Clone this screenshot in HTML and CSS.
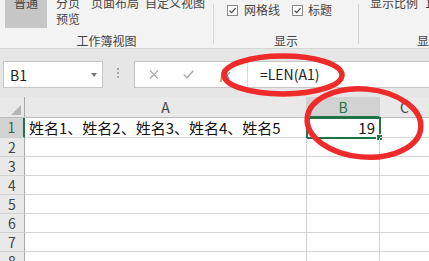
FILE: index.html
```html
<!DOCTYPE html>
<html lang="zh-CN">
<head>
  <meta charset="UTF-8" />
  <title>Excel LEN</title>
  <link rel="stylesheet" href="styles.css">
</head>
<body>
  <div class="ribbon">
    <div class="group group-views">
      <div class="tools">
        <div class="btn btn-normal">普通</div>
        <div class="btn btn-page">分页<br>预览</div>
        <div class="btn btn-layout">页面布局</div>
        <div class="btn btn-custom">自定义视图</div>
      </div>
      <div class="group-label">工作簿视图</div>
    </div>
    <div class="group group-show">
      <div class="tools checks">
        <span class="check">
          <svg width="11" height="11" viewBox="0 0 11 11"><rect x="0.5" y="0.5" width="10" height="10" fill="#fff" stroke="#8a8a8a"/><path d="M2.5 5.6 L4.6 7.7 L8.6 3.2" fill="none" stroke="#444" stroke-width="1.2"/></svg>
          网格线
        </span>
        <span class="check check-title">
          <svg width="11" height="11" viewBox="0 0 11 11"><rect x="0.5" y="0.5" width="10" height="10" fill="#fff" stroke="#8a8a8a"/><path d="M2.5 5.6 L4.6 7.7 L8.6 3.2" fill="none" stroke="#444" stroke-width="1.2"/></svg>
          标题
        </span>
      </div>
      <div class="group-label">显示</div>
    </div>
    <div class="group group-zoom">
      <div class="tools">
        <div class="btn">显示比例</div>
        <div class="btn btn-one">1</div>
      </div>
      <div class="group-label zoom-label">显示比例</div>
    </div>
  </div>

  <div class="fbar">
    <div class="namebox">
      <span>B1</span>
      <span class="caret"></span>
    </div>
    <div class="dots"><i></i><i></i><i></i></div>
    <div class="formula">
      <div class="fx-tools">
        <svg class="ico-cancel" width="10" height="9" viewBox="0 0 10 9"><path d="M1 0.5 L9 8.5 M9 0.5 L1 8.5" stroke="#a8a8a8" stroke-width="1.1"/></svg>
        <svg class="ico-enter" width="11" height="9" viewBox="0 0 11 9"><path d="M0.8 4.6 L4 7.8 L10.3 0.8" fill="none" stroke="#a8a8a8" stroke-width="1.4"/></svg>
        <span class="fx">fx</span>
      </div>
      <div class="input">=LEN(A1)</div>
    </div>
  </div>

  <div class="sheet">
    <div class="corner"><span class="tri"></span></div>
    <div class="colhead">A</div>
    <div class="colhead active">B</div>
    <div class="colhead last">C</div>

    <div class="rowhead active">1</div>
    <div class="cell">姓名1、姓名2、姓名3、姓名4、姓名5</div>
    <div class="cell num selected">19<span class="handle"></span></div>
    <div class="cell last"></div>

    <div class="rowhead">2</div><div class="cell"></div><div class="cell"></div><div class="cell last"></div>
    <div class="rowhead">3</div><div class="cell"></div><div class="cell"></div><div class="cell last"></div>
    <div class="rowhead">4</div><div class="cell"></div><div class="cell"></div><div class="cell last"></div>
    <div class="rowhead">5</div><div class="cell"></div><div class="cell"></div><div class="cell last"></div>
    <div class="rowhead">6</div><div class="cell"></div><div class="cell"></div><div class="cell last"></div>
    <div class="rowhead">7</div><div class="cell"></div><div class="cell"></div><div class="cell last"></div>
    <div class="rowhead">8</div><div class="cell"></div><div class="cell"></div><div class="cell last"></div>
  </div>

  <!-- hand drawn red marks on top of the screenshot -->
  <svg class="marks" width="429" height="261" viewBox="0 0 429 261">
    <ellipse cx="283" cy="75" rx="59" ry="19" fill="none" stroke="#ee2a2a" stroke-width="5.5"/>
    <ellipse cx="364" cy="123" rx="57" ry="34" fill="none" stroke="#ee2a2a" stroke-width="5.5" transform="rotate(5 364 123)"/>
  </svg>
</body>
</html>
```

FILE: styles.css
```css
* {
  box-sizing: border-box;
}

body {
  margin: 0;
  width: 429px;
  height: 261px;
  overflow: hidden;
  position: relative;
  background: #fff;
  font-family: "Noto Sans CJK SC", "Noto Sans", sans-serif;
  color: #444;
}

/* ribbon */

.ribbon {
  display: flex;
  height: 49px;
  padding-top: 4px;
  background: #f3f3f3;
  border-bottom: 1px solid #d6d6d6;
  overflow: hidden;
  font-size: 12px;
}

.group {
  display: flex;
  flex-direction: column;
  flex-shrink: 0;
  height: 40px;
  border-right: 1px solid #d4d4d4;
}

.group-views { width: 214px; }
.group-show { width: 145px; }
.group-zoom { width: 200px; border-right: none; }

.tools {
  display: flex;
  align-items: flex-start;
  margin-top: -9px;
  line-height: 16px;
  white-space: nowrap;
}

.group-views .tools { padding-left: 5px; }

.btn {
  white-space: nowrap;
  flex-shrink: 0;
}

.btn-normal {
  width: 42px;
  height: 33px;
  background: #c6c6c6;
  text-align: center;
}

.btn-page { margin-left: 9px; }
.btn-layout { margin-left: 11px; }
.btn-custom { margin-left: 6px; }

.group-label {
  margin-top: auto;
  margin-bottom: -4px;
  line-height: 14px;
  text-align: center;
  white-space: nowrap;
}

.checks {
  margin-top: -2px;
  padding-left: 13px;
}

.check {
  display: flex;
  align-items: center;
  gap: 6px;
  flex-shrink: 0;
}

.check-title {
  margin-left: 12px;
  gap: 5px;
}

.group-zoom .tools { padding-left: 11px; }
.btn-one { margin-left: 7px; }

.zoom-label {
  text-align: left;
  padding-left: 58px;
}

/* formula bar */

.fbar {
  display: flex;
  align-items: flex-start;
  height: 48px;
  padding-top: 12px;
  background: #e6e6e6;
}

.namebox {
  display: flex;
  align-items: center;
  justify-content: space-between;
  width: 100px;
  height: 27px;
  margin-left: 3px;
  padding: 0 5px 0 6px;
  background: #fff;
  border: 1px solid #c6c6c6;
  font-size: 14px;
  color: #222;
}

.caret {
  width: 0;
  height: 0;
  border-left: 3px solid transparent;
  border-right: 3px solid transparent;
  border-top: 4px solid #777;
}

.dots {
  display: flex;
  flex-direction: column;
  gap: 2px;
  margin: 7px 0 0 14px;
}

.dots i {
  width: 2px;
  height: 2px;
  background: #a8a8a8;
}

.formula {
  display: flex;
  height: 27px;
  margin-left: 15px;
  flex: 1;
  background: #fff;
  border: 1px solid #c6c6c6;
  border-right: none;
}

.fx-tools {
  display: flex;
  align-items: center;
  width: 113px;
  padding-left: 14px;
  border-right: 1px solid #d8d8d8;
}

.ico-enter { margin-left: 24px; }

.fx {
  margin-left: 26px;
  font-family: "Liberation Serif", serif;
  font-style: italic;
  font-size: 14px;
  color: #777;
}

.input {
  padding-left: 12px;
  font-size: 14px;
  line-height: 25px;
  color: #222;
}

/* sheet */

.sheet {
  display: grid;
  grid-template-columns: 25px 282px 73px 49px;
  grid-template-rows: 21px 20px repeat(7, 19px);
}

.corner {
  display: flex;
  align-items: flex-end;
  justify-content: flex-end;
  padding: 0 3px 2px 0;
  background: #e9e9e9;
  border-right: 1px solid #ababab;
  border-bottom: 1px solid #bdbdbd;
}

.tri {
  width: 0;
  height: 0;
  border-left: 10px solid transparent;
  border-bottom: 10px solid #b5b5b5;
}

.colhead {
  background: #e9e9e9;
  border-right: 1px solid #d0d0d0;
  border-bottom: 1px solid #bdbdbd;
  text-align: center;
  font-size: 14px;
  line-height: 21px;
}

.colhead.active {
  background: #d2d2d2;
  color: #217346;
  border-bottom: 2px solid #217346;
}

.rowhead {
  background: #e9e9e9;
  border-right: 1px solid #ababab;
  border-bottom: 1px solid #d0d0d0;
  text-align: center;
  font-size: 14px;
  line-height: 19px;
}

.rowhead.active {
  background: #d2d2d2;
  color: #217346;
  border-right: 2px solid #217346;
}

.cell {
  position: relative;
  border-right: 1px solid #d4d4d4;
  border-bottom: 1px solid #d4d4d4;
  padding: 0 4px;
  font-size: 15px;
  line-height: 19px;
  color: #111;
  white-space: nowrap;
}

.last { border-right: none; }

.num { text-align: right; }

.selected {
  outline: 2px solid #217346;
  outline-offset: -1px;
}

.handle {
  position: absolute;
  right: -4px;
  bottom: -4px;
  width: 7px;
  height: 7px;
  background: #217346;
  border: 1px solid #fff;
}

.marks {
  position: absolute;
  left: 0;
  top: 0;
  pointer-events: none;
}
```
